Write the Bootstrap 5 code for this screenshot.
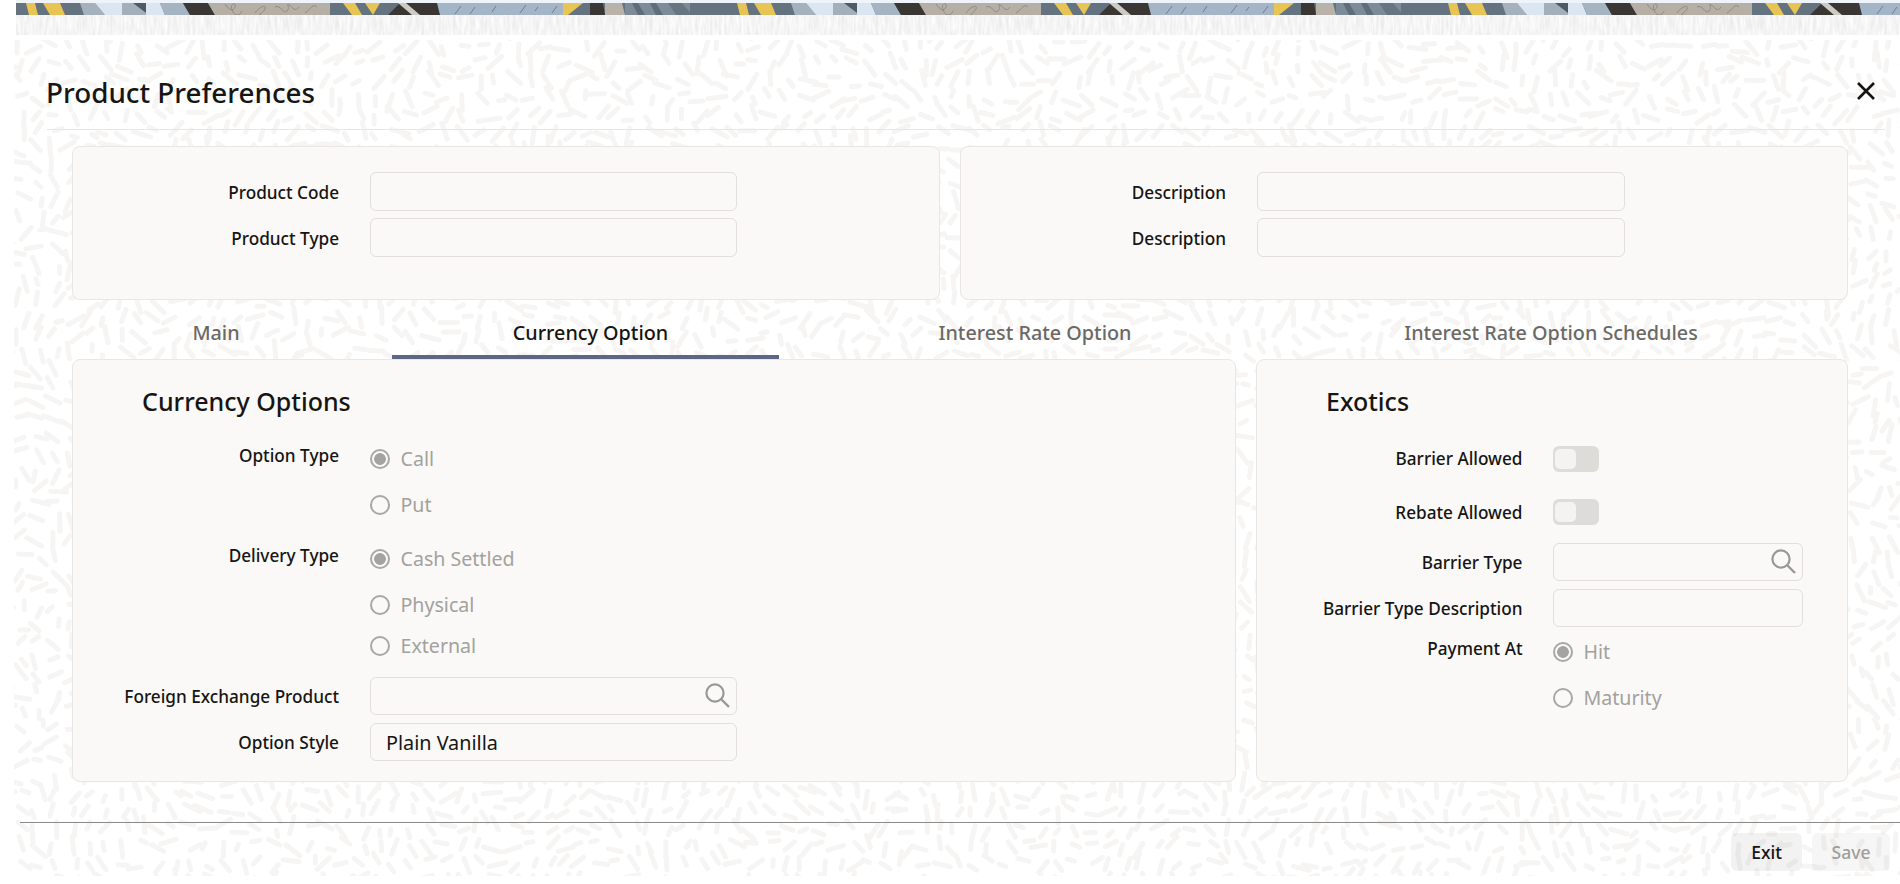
<!DOCTYPE html>
<html lang="en">
<head>
<meta charset="utf-8">
<title>Product Preferences</title>
<link rel="stylesheet" href="https://cdn.jsdelivr.net/npm/bootstrap@5.3.0/dist/css/bootstrap.min.css">
<style>
html,body{height:884px;overflow:hidden;background:#fff;font-family:"Noto Sans",sans-serif;color:#161513}
.topline{height:3px;margin-left:16px;background:#eff3fa}
.topart{display:block;height:12px;margin-left:16px;width:calc(100% - 16px)}
.noiseart{display:block;height:20px;margin-left:16px;width:calc(100% - 16px)}
.mdl{position:relative;margin:5px 0 0 14px;height:836px;overflow:hidden}
.texture{position:absolute;left:0;top:0;z-index:0}
.mdl-in{position:relative;z-index:1}
.mhead{height:90px;margin:0 15px 0 33px;padding-top:17px;border-bottom:1px solid #e8e6e4}
.mtitle{font-size:27.8px;font-weight:500;line-height:36px;margin:-2px 0 0 -1px}
.xbtn{display:block;width:18px;height:18px;margin:-4px 10px 0 0}
.bodyarea{margin:16px 52px 0 58px}
.pane{background:#faf9f7;border:1px solid #e9e6e3;border-radius:8px}
.pane-a{width:868px;height:154px;padding-top:25px}
.pane-b{width:888px;height:154px;padding-top:25px}
.pane-c{width:1164px;height:423px;padding-top:21px}
.pane-d{width:592px;height:423px;padding-top:21px}
.tabbar{height:59px}
.tabi{height:59px;padding-top:18px;border-bottom:4px solid transparent;font-size:19.8px;font-weight:500;line-height:30px;color:#6b6965;text-align:center;text-decoration:none}
.tabi.on{color:#161513;border-bottom-color:#5d6785}
.t1{width:320px;padding-right:32px}
.t2{width:387px;padding-left:10px}
.t3{width:512px}
.t4{width:557px;padding-right:37px}
.lbl{flex:none;width:266px;margin:0 31px 0 0;padding:1px 0 0;text-align:right;font-size:17.2px;font-weight:500;line-height:38px;color:#161513}
.lbl-b{width:265px;margin-right:31px}
.lbl-d{width:265.5px;margin-right:30.5px}
.lbl-up{line-height:40px;padding:0}
.frow .lbl{padding-top:2px}
.frow{height:38.5px;margin-bottom:7.5px}
.txt.form-control,.txt.form-control:disabled{background:transparent;border:1px solid #e2dfdc;border-radius:6px;height:100%;padding:0 15px;font-size:19.8px;color:#161513;box-shadow:none}
.fld{width:367px;height:100%;position:relative}
.fld-b{width:368px}
.fld-d{width:250px}
.srch{position:absolute;right:7px;top:6px;width:25px;height:25px}
.sech{font-size:25px;font-weight:500;line-height:40px;margin:0 0 15px 69px}
.sech-d{margin-bottom:11px}
.radrow{height:46px}
.h45{height:45px}
.h42{height:38px}
.form-check-input.rd,.form-check-input.rd:disabled{flex:none;width:20px;height:20px;margin:0 10.5px 0 0;background-color:transparent;border:2px solid #a9a7a3;opacity:1;box-shadow:none}
.form-check-input.rd:checked{background-image:radial-gradient(circle,#a5a3a0 0 5.5px,transparent 6.2px)}
.form-check-input.rd:disabled~.form-check-label{opacity:1}
.rdtxt.form-check-label{font-size:19.6px;color:#a3a19d;line-height:30px}
.rdgrp{flex:none}
.gap12{margin-top:12px}
.fe{margin-bottom:8px;height:38px}
.swrow{height:53.5px}
.swi{width:46px;height:26px;background:#dedcd9;border-radius:6px;padding:3px 2px}
.swk{width:21px;height:20px;background:#f4f3f1;border-radius:5px}
.hi{margin-top:4px;height:38px;margin-bottom:8px}
.hi2{height:38px;margin-bottom:2px}
.foot{margin:40px 0 0 6px;border-top:1px solid #8a8a8a;padding:10px 10px 0 0;gap:10px}
.act.btn{height:38px;border:0;border-radius:6px;background:rgba(22,21,19,.055);font-size:17.5px;font-weight:500;padding:0;color:#161513;opacity:1}
.act-e{width:71px}
.act-s{width:78px}
.act-s.btn{color:#a09e9a;background:rgba(22,21,19,.04)}
</style>
</head>
<body>
<div class="topline"></div>
<svg class="topart" xmlns="http://www.w3.org/2000/svg" aria-hidden="true">
  <defs>
    <pattern id="tile" patternUnits="userSpaceOnUse" x="-16" y="0" width="711" height="12">
      <rect width="711" height="12" fill="#64737f"/>
      <polygon fill="#e8c454" points="26,0 35,0 38,12 29,12"/>
      <polygon fill="#e8c454" points="43,0 60,0 65,12 50,12"/>
      <polygon fill="#a5b2be" points="80,0 95,0 105,12 84,12"/>
      <polygon fill="#dbe6f2" points="95,0 125,0 122,12 105,12"/>
      <polygon fill="#a3b0bc" points="122,0 146,0 146,12 122,12"/>
      <polygon fill="#4e5b66" points="133,0 146,0 146,10"/>
      <polygon fill="#dbe6f2" points="146,0 160,0 165,12 146,12"/>
      <polygon fill="#a5b4c2" points="160,0 183,0 190,12 165,12"/>
      <polygon fill="#3a3634" points="183,0 208,0 215,12 190,12"/>
      <polygon fill="#b5afa6" points="208,0 330,0 330,12 215,12"/>
      <path fill="none" stroke="#8f8a83" stroke-width="1" d="M225 1c4 6 8 8 10 3s-6-4-3 3 8 6 10 1M255 10c6-8 12-8 10-4s-8 6-4 6M275 4c6-3 8 8 12 4s-2-8 2-6 6 8 10 2M305 10c6-4 8-10 12-6"/>
      <polygon fill="#e8c454" points="343,0 355,0 362,12 352,12"/>
      <polygon fill="#e8c454" points="365,0 380,0 373,12"/>
      <polygon fill="#3a3634" points="388,12 400,0 440,0 440,12"/>
      <polygon fill="#cfcac3" points="398,0 406,0 420,12 412,12"/>
      <polygon fill="#a3b5c6" points="437,0 563,0 563,12 440,12"/>
      <path fill="none" stroke="#6e7f8e" stroke-width="1" d="M455 11l6-8M470 11l5-7M492 9l4-6M520 10l6-8M535 8l3-4M552 10l5-7"/>
      <polygon fill="#e8c454" points="563,0 583,0 568,12 563,12"/>
      <polygon fill="#3a3634" points="590,0 603,0 605,12 590,12"/>
      <polygon fill="#b9b2a9" points="605,0 622,0 625,12 605,12"/>
      <rect x="625" width="65" height="12" fill="#7d8a97"/>
      <polygon fill="#5f6d79" points="632,0 638,0 645,12 638,12"/>
      <polygon fill="#5f6d79" points="650,0 656,0 663,12 656,12"/>
      <polygon fill="#66757f" points="668,0 682,0 692,12 676,12"/>
    </pattern>
  </defs>
  <rect width="100%" height="12" fill="url(#tile)"/>
</svg>
<svg class="noiseart" xmlns="http://www.w3.org/2000/svg" aria-hidden="true">
  <defs>
    <filter id="nf" x="0" y="0" width="100%" height="100%">
      <feTurbulence type="fractalNoise" baseFrequency="0.35 0.06" numOctaves="2" seed="3"/>
      <feColorMatrix values="0 0 0 0 .72  0 0 0 0 .72  0 0 0 0 .72  .9 0 0 0 -.15"/>
    </filter>
  </defs>
  <rect width="100%" height="100%" filter="url(#nf)"/>
</svg>

<div class="mdl">
  <svg class="texture" id="tex" width="1886" height="836" xmlns="http://www.w3.org/2000/svg" aria-hidden="true"><path id="texp" fill="none" stroke="#f6f5f4" stroke-width="5" stroke-linecap="round"/></svg>
  <div class="mdl-in">
    <div class="mhead d-flex align-items-center justify-content-between">
      <h1 class="mtitle">Product Preferences</h1>
      <svg class="xbtn" viewBox="0 0 18 18" aria-label="Close"><path d="M1 1l16 16M17 1L1 17" stroke="#161513" stroke-width="2.6" fill="none"/></svg>
    </div>
    <div class="bodyarea">
      <div class="d-flex gap-0 justify-content-between">
        <div class="pane pane-a">
          <div class="frow d-flex"><label class="lbl">Product Code</label><div class="fld"><input class="form-control txt" disabled></div></div>
          <div class="frow d-flex"><label class="lbl">Product Type</label><div class="fld"><input class="form-control txt" disabled></div></div>
        </div>
        <div class="pane pane-b">
          <div class="frow d-flex"><label class="lbl lbl-b">Description</label><div class="fld fld-b"><input class="form-control txt" disabled></div></div>
          <div class="frow d-flex"><label class="lbl lbl-b">Description</label><div class="fld fld-b"><input class="form-control txt" disabled></div></div>
        </div>
      </div>
      <nav class="tabbar d-flex">
        <a class="tabi t1" href="#">Main</a>
        <a class="tabi t2 on" href="#">Currency Option</a>
        <a class="tabi t3" href="#">Interest Rate Option</a>
        <a class="tabi t4" href="#">Interest Rate Option Schedules</a>
      </nav>
      <div class="d-flex justify-content-between">
        <section class="pane pane-c">
          <h2 class="sech">Currency Options</h2>
          <div class="d-flex">
            <label class="lbl lbl-up">Option Type</label>
            <div class="rdgrp">
              <div class="radrow form-check p-0 m-0 d-flex align-items-center"><input class="form-check-input rd" type="radio" name="ot" checked disabled><label class="form-check-label rdtxt">Call</label></div>
              <div class="radrow form-check p-0 m-0 d-flex align-items-center"><input class="form-check-input rd" type="radio" name="ot" disabled><label class="form-check-label rdtxt">Put</label></div>
            </div>
          </div>
          <div class="d-flex mt-2">
            <label class="lbl lbl-up">Delivery Type</label>
            <div class="rdgrp">
              <div class="radrow form-check p-0 m-0 d-flex align-items-center"><input class="form-check-input rd" type="radio" name="dt" checked disabled><label class="form-check-label rdtxt">Cash Settled</label></div>
              <div class="radrow h45 form-check p-0 m-0 d-flex align-items-center"><input class="form-check-input rd" type="radio" name="dt" disabled><label class="form-check-label rdtxt">Physical</label></div>
              <div class="radrow h42 form-check p-0 m-0 d-flex align-items-center"><input class="form-check-input rd" type="radio" name="dt" disabled><label class="form-check-label rdtxt">External</label></div>
            </div>
          </div>
          <div class="fe gap12 d-flex"><label class="lbl">Foreign Exchange Product</label><div class="fld"><input class="form-control txt" disabled>
            <svg class="srch" viewBox="0 0 25 25"><circle cx="10" cy="10" r="8.6" fill="none" stroke="#9a9895" stroke-width="2.2"/><path d="M16 16l8 8" stroke="#9a9895" stroke-width="2.4"/></svg></div></div>
          <div class="fe d-flex"><label class="lbl">Option Style</label><div class="fld"><input class="form-control txt" disabled value="Plain Vanilla"></div></div>
        </section>
        <section class="pane pane-d">
          <h2 class="sech sech-d">Exotics</h2>
          <div class="swrow d-flex align-items-center"><label class="lbl lbl-d">Barrier Allowed</label><div class="swi"><div class="swk"></div></div></div>
          <div class="swrow d-flex align-items-center"><label class="lbl lbl-d">Rebate Allowed</label><div class="swi"><div class="swk"></div></div></div>
          <div class="hi d-flex"><label class="lbl lbl-d">Barrier Type</label><div class="fld fld-d"><input class="form-control txt" disabled>
            <svg class="srch" viewBox="0 0 25 25"><circle cx="10" cy="10" r="8.6" fill="none" stroke="#9a9895" stroke-width="2.2"/><path d="M16 16l8 8" stroke="#9a9895" stroke-width="2.4"/></svg></div></div>
          <div class="hi2 d-flex"><label class="lbl lbl-d">Barrier Type Description</label><div class="fld fld-d"><input class="form-control txt" disabled></div></div>
          <div class="d-flex">
            <label class="lbl lbl-d lbl-up">Payment At</label>
            <div class="rdgrp">
              <div class="radrow form-check p-0 m-0 d-flex align-items-center"><input class="form-check-input rd" type="radio" name="pa" checked disabled><label class="form-check-label rdtxt">Hit</label></div>
              <div class="radrow h45 form-check p-0 m-0 d-flex align-items-center"><input class="form-check-input rd" type="radio" name="pa" disabled><label class="form-check-label rdtxt">Maturity</label></div>
            </div>
          </div>
        </section>
      </div>
    </div>
    <div class="foot d-flex justify-content-end">
      <button class="btn act act-e" type="button">Exit</button>
      <button class="btn act act-s" type="button" disabled>Save</button>
    </div>
  </div>
</div>
<script src="https://cdn.jsdelivr.net/npm/bootstrap@5.3.0/dist/js/bootstrap.bundle.min.js"></script>
<script>
(function(){
  var s=12345;function r(){s=(s*16807)%2147483647;return s/2147483647;}
  var d=[],st=17;
  for(var y=-10;y<846;y+=st){for(var x=-10;x<1896;x+=st){
    var px=x+(r()-.5)*11,py=y+(r()-.5)*11;
    var a=Math.sin(px/47)*1.9+Math.cos(py/41)*1.9+Math.sin((px-py)/90)*1.5+(r()-.5)*.9;
    var l=(3+r()*6);
    var dx=Math.cos(a)*l,dy=Math.sin(a)*l;
    d.push('M'+(px-dx).toFixed(1)+' '+(py-dy).toFixed(1)+'L'+(px+dx).toFixed(1)+' '+(py+dy).toFixed(1));
  }}
  document.getElementById('texp').setAttribute('d',d.join(''));
})();
</script>
</body>
</html>
